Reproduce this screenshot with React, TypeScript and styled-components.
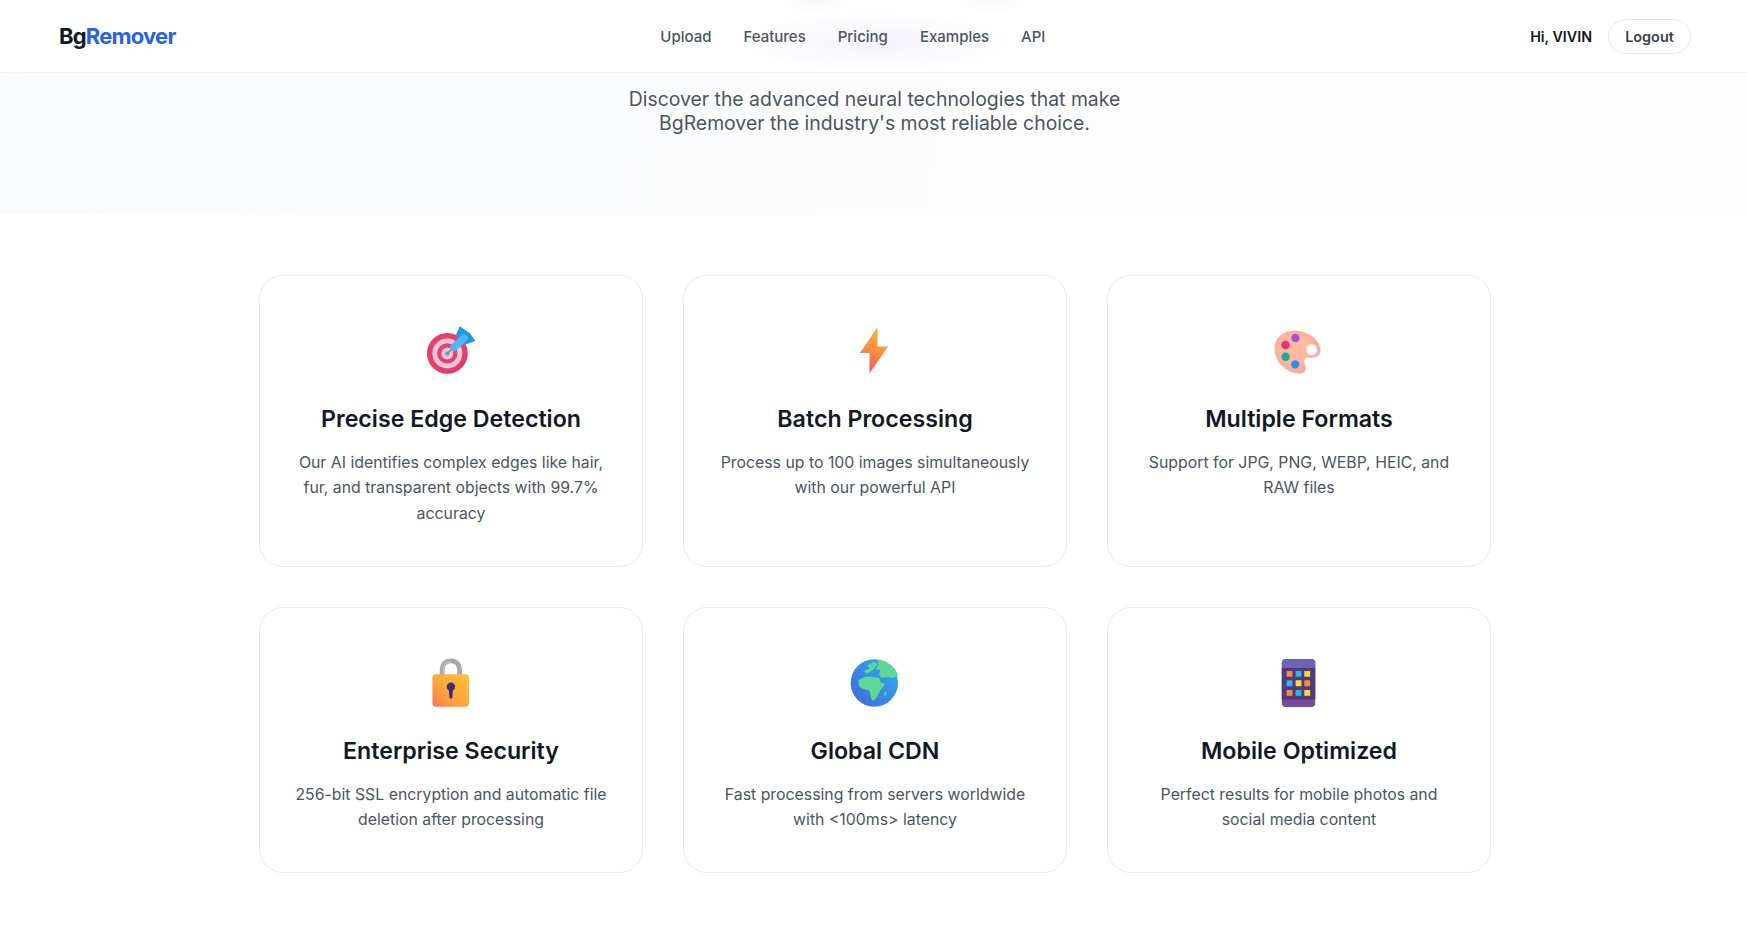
import { FunctionComponent, ReactNode } from 'react';
import styled, { createGlobalStyle } from 'styled-components';

const GlobalStyle = createGlobalStyle`
    * {
        box-sizing: border-box;
    }

    body {
        margin: 0;
        background: #ffffff;
        font-family: Inter, "Noto Sans", sans-serif;
        color: #111827;
    }
`;

const Nav = styled.nav`
    height: 73px;
    padding: 0 56px;
    display: flex;
    justify-content: space-between;
    align-items: center;
    border-bottom: 1px solid #f1f2f4;
    background:
        radial-gradient(ellipse 135px 30px at 875px 42px, #f4f3fe 0%, rgba(244, 243, 254, 0.55) 55%, rgba(255, 255, 255, 0) 100%),
        radial-gradient(ellipse 32px 14px at 815px 0, #f6f6f8 0%, rgba(255, 255, 255, 0) 100%),
        radial-gradient(ellipse 32px 14px at 992px 0, #f7f7f7 0%, rgba(255, 255, 255, 0) 100%),
        #ffffff;
`;

const Logo = styled.div`
    font-size: 22px;
    font-weight: 700;
    letter-spacing: -0.8px;
    color: #111827;
    padding-left: 3px;
`;

const LogoAccent = styled.span`
    color: #2563eb;
`;

const NavLinks = styled.div`
    display: flex;
    gap: 32px;
`;

const NavLink = styled.a`
    font-size: 15px;
    font-weight: 500;
    color: #4b5563;
    text-decoration: none;
`;

const UserArea = styled.div`
    display: flex;
    align-items: center;
    gap: 16px;
`;

const Greeting = styled.span`
    font-size: 14.3px;
    font-weight: 600;
    color: #111827;
`;

const LogoutButton = styled.button`
    height: 35px;
    width: 83px;
    border: 1px solid #e5e7eb;
    border-radius: 18px;
    background: #ffffff;
    color: #374151;
    font-family: Inter, sans-serif;
    font-size: 14.4px;
    font-weight: 600;
    padding: 0;
`;

const Hero = styled.section`
    height: 142px;
    padding: 14px 0 0 2px;
    background: linear-gradient(100deg, #f9fafc 0%, #fbfcfd 30%, #fdfdfe 55%, #fdfdfd 100%);
`;

const HeroText = styled.p`
    margin: 0 auto;
    max-width: 510px;
    font-size: 19.4px;
    line-height: 24px;
    text-align: center;
    color: #4b5563;
`;

const Grid = styled.main`
    width: 1232px;
    margin: 60px 0 0 259px;
    display: grid;
    grid-template-columns: repeat(3, 1fr);
    gap: 40px;
`;

const Card = styled.article`
    border: 1px solid #e8e9ec;
    border-radius: 24px;
    padding: 40px 32px 39.7px;
    text-align: center;
    background: #ffffff;
`;

const IconBox = styled.div`
    height: 70px;
    margin-bottom: 19px;
    padding-right: 2px;
    display: flex;
    justify-content: center;
    align-items: center;
`;

const Emoji = styled.svg`
    width: 48px;
    height: 48px;
    overflow: visible;
`;

const CardTitle = styled.h3`
    margin: 0 0 16px;
    font-size: 23.2px;
    font-weight: 600;
    line-height: 29px;
    color: #111827;
`;

const CardText = styled.p`
    margin: 0;
    font-size: 15.84px;
    line-height: 25.34px;
    color: #4b5563;
`;

const Target = () => (
    <Emoji viewBox="0 0 32 32">
        <defs>
            <radialGradient id="ring" cx="0.45" cy="0.45" r="0.6">
                <stop offset="0.8" stopColor="#ec3c68" />
                <stop offset="1" stopColor="#d42f62" />
            </radialGradient>
        </defs>
        <circle cx="14.2" cy="17.6" r="13.6" fill="url(#ring)" />
        <circle cx="14.2" cy="17.6" r="10" fill="#e9c9da" />
        <circle cx="14.2" cy="17.6" r="6.8" fill="#ee3d68" />
        <circle cx="14.2" cy="17.6" r="4" fill="#e4cfe0" />
        <circle cx="14.2" cy="17.6" r="1.5" fill="#9d8d9e" />
        <path d="M14.4 17.4 L18 14" stroke="#8a7f92" strokeWidth="1" />
        <path d="M20.4 5.6 L22.7 0.2 L28.4 4.2 L25 8Z" fill="#1f96ef" stroke="#1f96ef" strokeWidth="1" strokeLinejoin="round" />
        <path d="M25.6 11.4 L32.2 9.1 L28.6 4.2 L24.6 8Z" fill="#1f96ef" stroke="#1f96ef" strokeWidth="1" strokeLinejoin="round" />
        <path d="M18.6 13.6 L25.4 7.4" stroke="#4db8f5" strokeWidth="5" strokeLinecap="round" />
    </Emoji>
);

const Bolt = () => (
    <Emoji viewBox="0 0 32 32">
        <defs>
            <linearGradient id="bolt" x1="0.6" y1="0" x2="0.4" y2="1">
                <stop offset="0" stopColor="#ffb338" />
                <stop offset="0.5" stopColor="#fb8f3e" />
                <stop offset="1" stopColor="#f65350" />
            </linearGradient>
        </defs>
        <path d="M18.4 0 L6.6 17.4 L13 17.4 L13 31 L25.4 13 L18.4 13 Z" fill="url(#bolt)" />
    </Emoji>
);

const Palette = () => (
    <Emoji viewBox="0 0 32 32">
        <defs>
            <radialGradient id="paint" cx="0.45" cy="0.45" r="0.65">
                <stop offset="0.5" stopColor="#ffb9a1" />
                <stop offset="1" stopColor="#fb9d8e" />
            </radialGradient>
        </defs>
        <path
            d="M12 2.6 C20 1.8 30.6 7 31 15.5 C31.2 20 26 21 23 20.5 C20.5 20.2 19.5 22 20.5 24.5 C22 28 21 31 17.5 31 C8 31 0.4 23 0.4 14.5 C0.4 7 6 3.2 12 2.6Z"
            fill="url(#paint)"
        />
        <circle cx="25.2" cy="15.1" r="3.6" fill="#ffffff" />
        <circle cx="14.3" cy="7.3" r="2.8" fill="#a64fe0" />
        <circle cx="7.7" cy="12" r="2.8" fill="#ea2f74" />
        <circle cx="7.7" cy="19.8" r="2.8" fill="#23a98f" />
        <circle cx="14.1" cy="24.9" r="2.8" fill="#2e8ff2" />
    </Emoji>
);

const Lock = () => (
    <Emoji viewBox="0 0 32 32">
        <defs>
            <linearGradient id="lockBody" x1="1" y1="0" x2="0" y2="1">
                <stop offset="0" stopColor="#ffc23a" />
                <stop offset="0.65" stopColor="#fd9f3e" />
                <stop offset="1" stopColor="#f9774f" />
            </linearGradient>
        </defs>
        <path d="M10.8 12 V7.5 C10.8 3.6 13 1.2 16.6 1.2 C20.2 1.2 22.4 3.6 22.4 7.5 V12" fill="none" stroke="#a8a4b0" strokeWidth="3.2" />
        <path d="M11.6 12 V7.5 C11.6 4 13.4 2 16.6 2" fill="none" stroke="#c9bcd8" strokeWidth="1" />
        <rect x="4.3" y="10.2" width="24.4" height="21.6" rx="2.4" fill="url(#lockBody)" />
        <circle cx="16.6" cy="18.5" r="2.8" fill="#3f2f72" />
        <path d="M15.2 19 H18 L17.6 25.4 C17.5 26.8 15.7 26.8 15.6 25.4Z" fill="#3f2f72" />
    </Emoji>
);

const Globe = () => (
    <Emoji viewBox="0 0 32 32">
        <defs>
            <linearGradient id="sea" x1="1" y1="0" x2="0" y2="1">
                <stop offset="0" stopColor="#22b5f2" />
                <stop offset="1" stopColor="#4a62d6" />
            </linearGradient>
        </defs>
        <circle cx="16.2" cy="16" r="15.8" fill="url(#sea)" />
        <g transform="translate(-6.67 -9.33) scale(.2222)" fill="#5fd596">
            <path d="M56 106 C66 95 85 92 100 96 L118 98 L122 112 L136 116 C130 128 122 132 118 142 C112 152 108 166 98 167 C91 160 92 146 87 136 C78 134 60 132 56 120Z" />
            <path d="M112 46 C140 43 162 62 175 90 L160 99 L142 96 L124 98 L117 88 L122 76 L106 72 L116 60Z" />
            <path d="M82 62 L100 50 L113 56 L102 72 L94 78 L82 86 L72 78 L88 70Z" />
            <path d="M134 142 L140 139 L138 151 L132 153Z" />
        </g>
    </Emoji>
);

const Phone = () => (
    <Emoji viewBox="0 0 32 32">
        <rect x="5.2" y="0" width="22.3" height="32" rx="2.6" fill="#7a4a9e" />
        <path d="M5.2 7 V2.6 C5.2 1.2 6.4 0 7.8 0 H24.9 C26.3 0 27.5 1.2 27.5 2.6 V7Z" fill="#6b63b4" />
        <rect x="5.2" y="6" width="22.3" height="21" fill="#4f3b78" />
        {[
            [8.4, 8, '#ff8a3d'],
            [14.4, 8, '#2fb4f5'],
            [20.2, 8, '#ffd93b'],
            [8.4, 14.2, '#2fb4f5'],
            [14.4, 14.2, '#ffd93b'],
            [20.2, 14.2, '#ff8a3d'],
            [8.4, 20.6, '#ff8a3d'],
            [14.4, 20.6, '#2fb4f5'],
            [20.2, 20.6, '#ffd93b'],
        ].map(([x, y, fill]) => (
            <rect key={`${x}-${y}`} x={x} y={y} width="3.9" height="3.9" rx="0.4" fill={fill as string} />
        ))}
    </Emoji>
);

interface IFeature {
    icon: ReactNode;
    title: string;
    text: string;
}

const features: IFeature[] = [
    {
        icon: <Target />,
        title: 'Precise Edge Detection',
        text: 'Our AI identifies complex edges like hair, fur, and transparent objects with 99.7% accuracy',
    },
    {
        icon: <Bolt />,
        title: 'Batch Processing',
        text: 'Process up to 100 images simultaneously with our powerful API',
    },
    {
        icon: <Palette />,
        title: 'Multiple Formats',
        text: 'Support for JPG, PNG, WEBP, HEIC, and RAW files',
    },
    {
        icon: <Lock />,
        title: 'Enterprise Security',
        text: '256-bit SSL encryption and automatic file deletion after processing',
    },
    {
        icon: <Globe />,
        title: 'Global CDN',
        text: 'Fast processing from servers worldwide with <100ms> latency',
    },
    {
        icon: <Phone />,
        title: 'Mobile Optimized',
        text: 'Perfect results for mobile photos and social media content',
    },
];

const links = ['Upload', 'Features', 'Pricing', 'Examples', 'API'];

const App: FunctionComponent = () => (
    <>
        <GlobalStyle />
        <Nav>
            <Logo>
                Bg<LogoAccent>Remover</LogoAccent>
            </Logo>
            <NavLinks>
                {links.map(link => (
                    <NavLink key={link} href="#">
                        {link}
                    </NavLink>
                ))}
            </NavLinks>
            <UserArea>
                <Greeting>Hi, VIVIN</Greeting>
                <LogoutButton>Logout</LogoutButton>
            </UserArea>
        </Nav>
        <Hero>
            <HeroText>Discover the advanced neural technologies that make BgRemover the industry's most reliable choice.</HeroText>
        </Hero>
        <Grid>
            {features.map(feature => (
                <Card key={feature.title}>
                    <IconBox>{feature.icon}</IconBox>
                    <CardTitle>{feature.title}</CardTitle>
                    <CardText>{feature.text}</CardText>
                </Card>
            ))}
        </Grid>
    </>
);

export default App;
